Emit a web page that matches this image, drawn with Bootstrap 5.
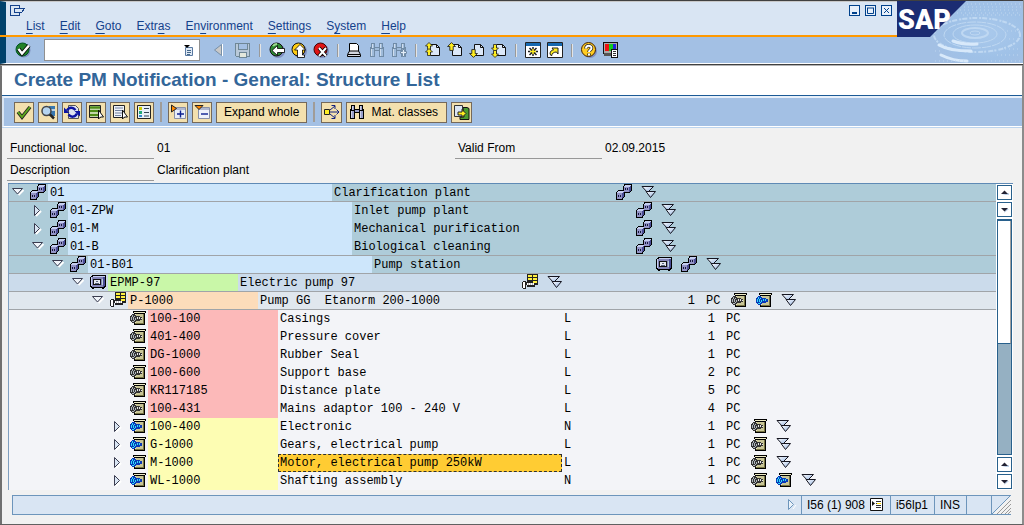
<!DOCTYPE html>
<html lang="en">
<head>
<meta charset="utf-8">
<meta name="viewport" content="width=device-width, initial-scale=1">
<title>Create PM Notification - General: Structure List</title>
<link href="https://cdn.jsdelivr.net/npm/bootstrap@5.3.0/dist/css/bootstrap.min.css" rel="stylesheet">
<style>
body{font:12px/18px "Liberation Sans",Arial,sans-serif;color:#000;background:#f1f1f1;min-height:100vh;overflow:hidden}
.win{min-height:100vh;border-right:2px solid #8c8c8c;border-bottom:1px solid #606060}
.hdr{border-top:1px solid #404040;border-bottom:1px solid #404040;background:#a3c0e4;margin-right:-1px}
.menuarea{height:34px;background:#d9e5f3;border-left:6px solid #00416b;border-top:1px solid #c8c8c8}
.caption{height:16px;padding:3px 5px 0 4px}
.wctls{column-gap:5px}
.mainmenu{padding-left:20px;gap:15px;line-height:16px}
.mainmenu a{color:#14418b;text-decoration:none}
.mainmenu u{text-underline-offset:3px}
.wctl{width:11px;height:11px;padding:0;border:1px solid #00418b;background:#e8f0fa;line-height:0}
.orange{height:2px;background:#f90}
.stdbar{height:27px;border-left:6px solid #00416b;padding-left:9px;border-bottom:1px solid #fff}
.tools{gap:6px}
.icobtn{border:0;background:none;padding:0;width:16px;height:16px;line-height:0;flex:none}
svg{display:block;flex:none}
.px{shape-rendering:crispEdges}
.sep{width:2px;height:13px;background:#e4e4e4;border-left:1px solid #999;flex:none}
.tools .sep{margin:0 2px}
.cmdbox{width:156px;height:22px;border:1px solid #909090;background:#fff;margin:0 13px}
.cmdbox input{border:0;outline:0;width:130px;background:transparent;padding:0 4px}
.work{border-left:2px solid #707070;border-top:1px solid #b4b4b4}
.apptitle{font-size:19px;line-height:28px;font-weight:bold;color:#336699;background:#fff;padding-left:12px;height:30px;border-bottom:1px solid #1c5a96;margin:0}
.appbar{background:#a3c0e4;height:31px;border-top:2px solid #e8f0fa;border-bottom:1px solid #fff;border-left:2px solid #d9e5f3;padding-left:10px;gap:4px}
.appline{height:1px;background:#bcd4ee}
.sapbtn{height:21px;min-width:20px;border:1px solid #75695a;background:#f3e0ae;padding:0 1px;font-size:12px;line-height:19px;color:#000}
.sapbtn.wide{padding:0 7px}
.sapbtn.find{padding:0 8px 0 2px;gap:6px;--f:#9aa0cc}
.appbar .sep{height:20px;background:#a09c98;border:0;margin:0 2px}
.dim{color:#708ba6;--f:#9fbbda}
.fields{padding:9px 0 2px 5px}
.frow{height:22px}
.flabel{width:147px;border-bottom:1px solid #989898;padding-left:3px;height:22px;padding-top:2px}
.fval{padding:2px 0 0 3px}
.fleft{width:448px}
.grid-wrap{margin:0 9px 0 6px;border-top:1px solid #5f8ab5}
.tree{list-style:none;margin:0;padding:0;font:12px/18px "Liberation Mono","Courier New",monospace;background:#f3f4f8;border-left:1px solid #7f9fc0;min-width:0;flex:1 1 0;color:#000;overflow:hidden}
.tree li{display:flex;height:18px;white-space:pre;padding-left:3px}
.tree li.ln{border-bottom:1px solid #a0a4a8}
.l1{margin-left:20px}.l2{margin-left:40px}.l3{margin-left:60px}.l4{margin-left:80px}.l5{margin-left:100px}
.tog{width:18px;height:18px;border:0;background:none;padding:0;flex:none;line-height:0}
.typ{width:18px;flex:none}
.key{flex:none;width:130px;padding-left:2px}
.key.w{width:284px;background:#cde6fb}
.dsc{flex:none;width:284px;padding-left:2px}
.cat{flex:none;width:118px;padding-left:2px}
.qty{flex:none;width:35px;text-align:right}
.uom{flex:none;width:36px;padding-left:11px}
.ics{gap:9px}
.teal{background:#aeccd9}.lav{background:#cbdbeb}.pale{background:#e0e7ee}
.grn{background:#c9f7a8}.pch{background:#fcdcba}.red{background:#fcb9b9}.yel{background:#fdfdb3}
.selc{background:#fc3;outline:1px dashed #303030;outline-offset:-1px}
.sbar{width:17px;background:#fff;padding:1px}
.sbar button{width:15px;height:15px;border:1px solid #28608c;background:#fff;padding:0;margin-bottom:2px;line-height:0;flex:none}
.track{border:1px solid #28608c;border-top-width:2px;background:#95b0c2;flex:1 1 0;margin:0 0 2px;display:flex}
.thumb{height:53%;flex:1;background:#fff;border-right:1px solid #a0a0a0;border-bottom:1px solid #28608c}
.sbar button:last-child{margin:0}
.status{margin:5px 11px 9px 10px;height:20px;border:1px solid #6d95bb;border-right:0;background:#d9e5f3;line-height:18px}
.status>div{border-left:1px solid #6d95bb;padding:0 6px 0 5px}
.status .spare{width:25px}
.sess{gap:5px}
</style>
</head>
<body>
<svg width="0" height="0" class="position-absolute" aria-hidden="true">
<defs>
<linearGradient id="tri" x1="0" y1="0" x2="1" y2="1"><stop offset="0" stop-color="#fff"/><stop offset="1" stop-color="#8fb0e0"/></linearGradient>
<symbol id="cubes" viewBox="0 0 16 16"><g class="px"><path fill="#000" d="M8 0h8v7h-1v1h-1v1H7V2h1zM2 6h7v7H8v1H7v2H0V8h1V7h1z"/><path fill="#c4cdf0" d="M9 1h6v1H9zM8 2h6v1H8zM2 7h6v1H2zM1 8h6v1H1z"/><path fill="#9394c6" d="M8 3h5v5H8zM1 9h5v6H1z"/><path fill="#4a4c94" d="M14 2h1v5h-1zM13 3h1v5h-1zM7 8h1v5H7zM6 9h1v5H6z"/><path fill="#16163c" d="M9 4h1v2H9zM11 4h1v2h-1zM2 11h1v2H2zM4 11h1v2H4z"/></g></symbol>
<symbol id="box" viewBox="0 0 16 16"><g class="px"><path fill="#000" d="M2 1h14v12h-1v1h-1v1h-2v-1H4v1H2v-1H1v-1H0V3h1V2h1z"/><path fill="#c4cdf0" d="M3 2h12v1H3zM1 3h1v9H1z"/><path fill="#8586b8" d="M2 3h11v10H2z"/><path fill="#4a4c94" d="M13 3h2v9h-1v1h-1z"/><path fill="#111" d="M3 5h8v6H3z"/><path fill="#e4e8ee" d="M4 6h6v4H4z"/><path fill="#5b6480" d="M5 9h4v1H5zM6 7h2v1H6z"/><path fill="#b8d0dc" d="M12 5h1v6h-1z"/></g></symbol>
<symbol id="bom" viewBox="0 0 16 16"><g class="px"><path fill="#222" d="M5 0h11v11h-3v2H5v-2H4v4H1v-1H0V8h1V7h3v1h1z"/><path fill="#fff040" d="M6 1h4v2H6zM11 1h4v2h-4zM6 4h4v2H6zM11 4h4v2h-4zM11 7h4v2h-4z"/><path fill="#fff" d="M1 8h2v6H1zM5 9h1v2H5zM7 9h1v2H7zM9 9h1v2H9zM11 9h1v2h-1z"/><path fill="#b8b8b8" d="M6 9h1v2H6zM8 9h1v2H8zM10 9h1v2h-1z"/></g></symbol>
<symbol id="mat" viewBox="0 0 16 16"><g class="px"><path fill="#000" d="M3 1h13v2h-1v12H4v-2H2V4h2V3H3z"/><path fill="#eeebc5" d="M4 2h11v1H4zM5 4h1v9H5z"/><path fill="#c8c597" d="M6 4h7v9H6z"/><path fill="#777442" d="M13 4h1v10H5v-1h8z"/><path fill="#333" d="M2 4h3v1h1v1h4v1h2v3h-2v1H6v1H5v1H2v-1H1v-1H0V6h1V5h1z"/><path fill="#aeb6be" d="M2 5h1v2H2zM1 7h1v3H1zM4 6h1v1H4zM3 7h1v3H3zM5 8h1v2H5zM2 11h2v1H2zM4 10h1v1H4z"/><path fill="#e8e8e8" d="M7 7h1v2H7zM9 7h1v2H9zM11 8h1v1h-1z"/></g></symbol>
<symbol id="matb" viewBox="0 0 16 16"><use href="#mat"/><g class="px"><path fill="#0838b8" d="M2 4h3v1h1v1h4v1h2v3h-2v1H6v1H5v1H2v-1H1v-1H0V6h1V5h1z"/><path fill="#30e0f8" d="M2 5h1v2H2zM1 7h1v3H1zM4 6h1v1H4zM3 7h1v3H3zM5 8h1v2H5zM2 11h2v1H2zM4 10h1v1H4zM7 7h1v2H7zM9 7h1v2H9z"/></g></symbol>
<symbol id="dn" viewBox="0 0 16 16"><path d="M1 2.500h11.500L6.500 8.500z" fill="url(#tri)" stroke="#151520"/><path d="M5 7.500h9.500L9.500 13.500z" fill="url(#tri)" stroke="#151520"/></symbol>
<symbol id="op" viewBox="0 0 18 18"><path d="M11.500 6 6.500 11" fill="none" stroke="#fff" stroke-width="2"/><path d="M.5 4.500h10L5.500 10z" fill="#f0f4fa" stroke="#3a3c50"/></symbol>
<symbol id="cl" viewBox="0 0 18 18"><path d="M4 14l5-5" stroke="#fff" stroke-width="2"/><path d="M2.500 3.500v10l5-5z" fill="#d9e5f3" stroke="#3a3c50"/></symbol>
<symbol id="bino" viewBox="0 0 16 16"><g class="px"><path d="M2 1h4v4h4V1h4v4h1v10h-5V9H6v6H1V5h1z" fill="currentColor"/><path fill="var(--f)" d="M3 2h2v4H3zM11 2h2v4h-2zM2 7h3v7H2zM11 7h3v7h-3zM6 6h4v2H6z"/><path fill="#fff" opacity=".5" d="M3 2h1v4H3zM11 2h1v4h-1zM2 7h1v7H2zM11 7h1v7h-1z"/></g></symbol>
<symbol id="page" viewBox="0 0 16 16"><path d="M5.500 2.500h6l3 3v8h-9z" fill="#dce8f8" stroke="#111"/><path d="M11.500 2.500v3h3" fill="none" stroke="#111"/></symbol>
<symbol id="ua" viewBox="0 0 8 8"><path d="M4 .5 7.500 4H5.500v3.500h-3V4H.5z" fill="#ffee20" stroke="#222" stroke-width=".8"/></symbol>
</defs>
</svg>

<div class="win d-flex flex-column">
<header class="hdr d-flex">
  <div class="flex-grow-1">
    <div class="menuarea">
      <div class="caption d-flex justify-content-between">
        <svg class="px" width="16" height="12" fill="none" stroke="#14418b"><path d="M9.500 3V.5H.5v10h9V8M4.500 3.500h10l-3 4h-7z"/></svg>
        <div class="wctls d-flex">
          <button class="wctl" aria-label="Minimize"><svg width="9" height="9"><path d="M2 6h5v2H2z" fill="#00418b"/></svg></button>
          <button class="wctl" aria-label="Maximize"><svg width="9" height="9"><path d="M1.500 2v5.500h6V2M1 2h7" fill="none" stroke="#00418b"/></svg></button>
          <button class="wctl" aria-label="Close"><svg width="9" height="9"><path d="M2 2l5 5M7 2l-5 5" stroke="#00418b"/></svg></button>
        </div>
      </div>
      <nav class="mainmenu d-flex"><a href="#"><u>L</u>ist</a><a href="#"><u>E</u>dit</a><a href="#"><u>G</u>oto</a><a href="#">Extr<u>a</u>s</a><a href="#">En<u>v</u>ironment</a><a href="#"><u>S</u>ettings</a><a href="#">S<u>y</u>stem</a><a href="#"><u>H</u>elp</a></nav>
    </div>
    <div class="orange"></div>
    <div class="stdbar d-flex align-items-center">
      <button class="icobtn" aria-label="Enter"><svg width="17" height="16"><circle cx="8.500" cy="8.500" r="7" fill="#8090c0"/><circle cx="7.500" cy="7.500" r="6.500" fill="#228228" stroke="#052" /><path d="M3.500 7l3.500 4.500 7-8" fill="none" stroke="#000" stroke-width="4"/><path d="M3.500 7l3.500 4.500 7-8" fill="none" stroke="#fff" stroke-width="2.400"/></svg></button>
      <div class="cmdbox d-flex align-items-center justify-content-between"><input type="text" aria-label="Command"><button class="icobtn me-1" aria-label="History"><svg class="ms-1" width="11" height="14"><path d="M2.500 4.500h7v8h-7z" fill="#dfe9f5" stroke="#5878a0"/><path d="M4 7.500h4M4 9.500h4M4 11.500h3" stroke="#468"/><path d="M1 2h6L4 5z" fill="#000"/></svg></button></div>
      <div class="tools d-flex align-items-center">
      <button class="icobtn" aria-label="Collapse"><svg width="14" height="16"><path d="M9.500 2v12" stroke="#fff"/><path d="M8.500 2.500v11L1.500 8z" fill="#c8c8c8" stroke="#7890a8"/></svg></button>
      <button class="icobtn" aria-label="Save"><svg class="px" width="16" height="16"><path d="M.5 1.500h14v13h-13l-1-1z" fill="#b9c9d9" stroke="#6f8796"/><path d="M3 1h9v6H3z" fill="#a3c0e4" stroke="#6f8796"/><path d="M4 10h7v5H4z" fill="#e4e8dc" stroke="#6f8796"/></svg></button>
      <span class="sep"></span>
      <button class="icobtn" aria-label="Back"><svg width="17" height="16"><circle cx="9" cy="9" r="7" fill="#8090c0"/><circle cx="7.500" cy="7.500" r="6.500" fill="#2d8a32" stroke="#111"/><path d="M4 4a5 5 0 0 1 4-2" stroke="#9ddc90" fill="none" stroke-width="2"/><path d="M3 8.500l5.500-5v3H15.500v4H8.500v3z" fill="#fff" stroke="#000" stroke-width=".8"/></svg></button>
      <button class="icobtn" aria-label="Exit"><svg width="17" height="16"><circle cx="9" cy="9" r="7" fill="#8090c0"/><circle cx="7.500" cy="7.500" r="6.500" fill="#fc1" stroke="#111"/><path d="M9 2.500l5.500 5.500h-3v5h2v2.500H6.500V8H3.500z" fill="#fff" stroke="#000" stroke-width=".8"/></svg></button>
      <button class="icobtn" aria-label="Cancel"><svg width="17" height="16"><circle cx="9" cy="9" r="7" fill="#8090c0"/><circle cx="7.500" cy="7.500" r="6.500" fill="#e01515" stroke="#400"/><path d="M6 6l7 8M13 6l-7 8" stroke="#000" stroke-width="3.500"/><path d="M6 6l7 8M13 6l-7 8" stroke="#fff" stroke-width="2"/></svg></button>
      <span class="sep"></span>
      <button class="icobtn" aria-label="Print"><svg width="16" height="16"><path d="M2.500 9V1.500h7l2 2V9" fill="#fff" stroke="#000"/><path d="M2.500 9h9l2 3.500v2H.5v-2z" fill="#d4d8e0" stroke="#000"/><path d="M1 12.500h12" stroke="#000"/></svg></button>
      <button class="icobtn dim" aria-label="Find"><svg width="16" height="16"><use href="#bino"/></svg></button>
      <button class="icobtn dim" aria-label="Find next"><svg width="17" height="16"><use href="#bino" width="16" height="16"/><path d="M11.500 7.500h2v2h2v2h-2v3h-2v-3h-2v-2h2z" fill="#e4edf6" stroke="#708ba6"/></svg></button>
      <span class="sep"></span>
      <button class="icobtn" aria-label="First page"><svg width="16" height="16"><use href="#page"/><use href="#ua" width="8" height="8"/><use href="#ua" y="6" width="8" height="8"/></svg></button>
      <button class="icobtn" aria-label="Previous page"><svg width="16" height="16"><use href="#page"/><use href="#ua" width="9" height="9"/></svg></button>
      <button class="icobtn" aria-label="Next page"><svg width="16" height="16"><use href="#page"/><use href="#ua" width="9" height="9" transform="matrix(1 0 0 -1 0 16)"/></svg></button>
      <button class="icobtn" aria-label="Last page"><svg width="16" height="16"><use href="#page"/><use href="#ua" width="8" height="8" transform="matrix(1 0 0 -1 0 10)"/><use href="#ua" width="8" height="8" transform="matrix(1 0 0 -1 0 16)"/></svg></button>
      <span class="sep"></span>
      <button class="icobtn" aria-label="New session"><svg width="16" height="16"><path d="M.5.500h15v15H.5z" fill="#fff" stroke="#222"/><path d="M1 1h14v3H1z" fill="#1668b0"/><path d="M8 5v9M3 9.500h10M4.500 6l7 7M11.500 6l-7 7" stroke="#222" stroke-width="1.500"/><path d="M8 7v5M5 9.500h6" stroke="#fe2" stroke-width="1.500"/></svg></button>
      <button class="icobtn" aria-label="Shortcut"><svg width="16" height="16"><path d="M.5.500h15v15H.5z" fill="#fff" stroke="#222"/><path d="M1 1h14v3H1z" fill="#1668b0"/><path d="M3 12c0-3 2-4 3.500-4L5 6h6v6L9.500 10C7 10 5 11 4.500 14z" fill="#fe2" stroke="#222"/></svg></button>
      <span class="sep"></span>
      <button class="icobtn" aria-label="Help"><svg width="17" height="16"><circle cx="9" cy="9" r="7" fill="#8090c0"/><circle cx="7.500" cy="7.500" r="7" fill="#fc2" stroke="#420"/><path d="M5 6.500C5 3 10.500 3 10.500 6c0 2-2.500 2-2.500 4M8 11.500v2" fill="none" stroke="#222" stroke-width="3.500"/><path d="M5 6.500C5 3 10.500 3 10.500 6c0 2-2.500 2-2.500 4M8 11.500v2" fill="none" stroke="#fff" stroke-width="2"/></svg></button>
      <button class="icobtn" aria-label="Customize layout"><svg class="px" width="16" height="16"><path d="M0 0h15v12H0z" fill="#111"/><path d="M1 1h13v10H1z" fill="#aaa"/><path d="M2 2h4v7H2z" fill="#e11"/><path d="M6 2h4v7H6z" fill="#1c2"/><path d="M10 2h3v7h-3z" fill="#22d"/><path d="M1 11h10v3H1z" fill="#555"/><path d="M8.500 7.500h6v8h-6z" fill="#fff" stroke="#111"/><path d="M10 9.500h3M10 11.500h3M10 13.500h3" stroke="#333"/></svg></button>
      </div>
    </div>
  </div>
  <svg width="126" height="63" viewBox="0 0 126 63" role="img" aria-label="SAP">
    <defs><radialGradient id="wat" cx=".62" cy=".5" r=".6"><stop offset="0" stop-color="#a9c9ec"/><stop offset=".7" stop-color="#9fc1e7"/><stop offset="1" stop-color="#a3c0e4"/></radialGradient></defs>
    <path d="M0 0h126v63H0z" fill="#a3c0e4"/><path d="M69 0h57v63H33V36z" fill="url(#wat)"/>
    <g fill="none" stroke="#bfd8f2"><ellipse cx="78" cy="32" rx="5" ry="2"/><ellipse cx="78" cy="32" rx="13" ry="5" stroke-width="2"/><ellipse cx="78" cy="33" rx="22" ry="9"/><ellipse cx="78" cy="34" rx="31" ry="13" stroke-dasharray="9 1"/><ellipse cx="80" cy="34" rx="43" ry="17" stroke-width="2" stroke-dasharray="2 1 5 2"/></g>
    <path d="M42 44q10 6 32 6M56 40q10 4 24 3M44 54q12 6 26 6" fill="none" stroke="#d8e9fa" stroke-width="3" stroke-linecap="round"/>
    <g fill="none" stroke="#bed6ef" stroke-dasharray="1 3"><path d="M70 3h54M67 6h57M63 9h60M60 12h62M66 14h58M110 30h14M112 38h12M104 48h20M100 54h23M90 60h34M38 50h8M38 60h30"/></g>
    <path d="M0 0h69L33 36H0z" fill="#1b2c72"/>
    <text x="1" y="28" font-family="Roboto,sans-serif" font-weight="900" font-size="27" fill="#fff">SAP</text>
    <path d="M0 62.500h126" stroke="#fff"/>
  </svg>
</header>

<main class="work flex-grow-1 d-flex flex-column">
  <h1 class="apptitle">Create PM Notification - General: Structure List</h1>
  <div class="appbar d-flex align-items-center">
    <button class="sapbtn" aria-label="Choose"><svg width="16" height="16"><path d="M2 8l4 5L14 3" fill="none" stroke="#222" stroke-width="3.600"/><path d="M2 8l4 5L14 3" fill="none" stroke="#5fa81c" stroke-width="2"/></svg></button>
    <button class="sapbtn" aria-label="Details"><svg width="16" height="16"><path d="M3 2h12v10H3z" fill="#b8d0e8"/><path d="M9 2h6v3H9zM9 7h6v5H9z" fill="#3878b0"/><circle cx="6.500" cy="7" r="4.500" fill="#b5d4f0" stroke="#444" stroke-width="1.500"/><path d="M10 10.500l4 4" stroke="#222" stroke-width="2.500"/></svg></button>
    <button class="sapbtn" aria-label="Refresh"><svg width="16" height="16"><path d="M4.500 1.500h7l3 3v10h-10z" fill="#dfe4f0" stroke="#555"/><path d="M3 6.500C5 3 9 3 11.500 6M13 9.500c-2 4-6 4-8.500 1" fill="none" stroke="#0c14a0" stroke-width="2.500"/><path d="M0 3.500v5.500h5.500zM16 12.500V7h-5.500z" fill="#0c14a0"/></svg></button>
    <button class="sapbtn" aria-label="Select block"><svg width="16" height="16"><path d="M1.500 1.500h11v12h-11z" fill="#e8f0d8" stroke="#222"/><path d="M2 3.500h10M2 7h10M2 11h8" stroke="#4d8a18" stroke-width="2.500"/><path d="M10.500 6v9l2-2h3z" fill="#fff" stroke="#111"/></svg></button>
    <button class="sapbtn" aria-label="Deselect block"><svg width="16" height="16"><path d="M1.500 1.500h11v12h-11z" fill="#eef2f8" stroke="#222"/><path d="M3 4h8M3 6.500h8M3 9h7M3 11.500h6" stroke="#7080a0"/><path d="M10.500 6v9l2-2h3z" fill="#fff" stroke="#111"/></svg></button>
    <button class="sapbtn" aria-label="Configuration"><svg width="16" height="16"><path d="M1.500 1.500h13v13h-13z" fill="#e8f0f8" stroke="#222"/><path d="M3 3h3v3H3z" fill="#cc0"/><path d="M3 7h3v3H3z" fill="#2a7"/><path d="M3 11h3v2H3z" fill="#38c"/><path d="M8 4.500h5M8 8.500h5M8 12h5" stroke="#345"/></svg></button>
    <span class="sep"></span>
    <button class="sapbtn" aria-label="Expand node"><svg width="16" height="16"><path d="M4.500 3.500h11v11h-11z" fill="#e8eefa" stroke="#8890a8"/><path d="M5 4h10v2H5z" fill="#b0b8d0"/><path d="M7 10h7M10.500 6.500v7" stroke="#0c2090" stroke-width="1.400"/><path d="M1.500 1v7L6.500 4.500z" fill="#f80" stroke="#222"/></svg></button>
    <button class="sapbtn" aria-label="Collapse node"><svg width="16" height="16"><path d="M4.500 3.500h11v11h-11z" fill="#eef2fa" stroke="#8890a8"/><path d="M5 4h10v2H5z" fill="#b0b8d0"/><path d="M7 10h7" stroke="#0c2090" stroke-width="1.400"/><path d="M1 1.500h8L5 5.500z" fill="#f80" stroke="#222"/></svg></button>
    <button class="sapbtn wide">Expand whole</button>
    <span class="sep"></span>
    <button class="sapbtn" aria-label="Where used"><svg width="17" height="16"><path d="M1.500 5.500h5v5h-5z" fill="#fe2" stroke="#222"/><path d="M7 8h9M13.500 5.500L16 8l-2.500 2.500M7 6l5-4M8.500 1.500H12V5M7 10l5 4M8.500 14.500H12V11" fill="none" stroke="#102080"/></svg></button>
    <button class="sapbtn find d-flex align-items-center"><svg width="16" height="16"><use href="#bino"/></svg>Mat. classes</button>
    <button class="sapbtn" aria-label="Leave"><svg width="17" height="16"><path d="M10 3.500h4l2 1v11H7V13h4z" fill="#4a9a30" stroke="#111"/><path d="M1.500 1.500h8v11h-8z" fill="#dce6f4" stroke="#333"/><path d="M5 8h4V5.500L13 9.500l-4 4V11H5z" fill="#fe2" stroke="#222"/></svg></button>
  </div>
  <div class="appline"></div>
  <div class="fields">
    <div class="frow d-flex"><div class="fleft d-flex"><div class="flabel">Functional loc.</div><div class="fval">01</div></div><div class="flabel">Valid From</div><div class="fval">02.09.2015</div></div>
    <div class="frow d-flex"><div class="flabel">Description</div><div class="fval">Clarification plant</div></div>
  </div>
  <div class="grid-wrap d-flex">
    <ul class="tree">
      <li class="teal ln"><button class="tog" aria-label="Collapse"><svg width="18" height="18"><use href="#op"/></svg></button><span class="typ"><svg width="16" height="16"><use href="#cubes"/></svg></span><span class="key w">01</span><span class="dsc">Clarification plant</span><span class="ics d-flex"><svg width="16" height="16"><use href="#cubes"/></svg><svg width="16" height="16"><use href="#dn"/></svg></span></li>
      <li class="teal"><button class="tog l1" aria-label="Expand"><svg width="18" height="18"><use href="#cl"/></svg></button><span class="typ"><svg width="16" height="16"><use href="#cubes"/></svg></span><span class="key w">01-ZPW</span><span class="dsc">Inlet pump plant</span><span class="ics d-flex"><svg width="16" height="16"><use href="#cubes"/></svg><svg width="16" height="16"><use href="#dn"/></svg></span></li>
      <li class="teal"><button class="tog l1" aria-label="Expand"><svg width="18" height="18"><use href="#cl"/></svg></button><span class="typ"><svg width="16" height="16"><use href="#cubes"/></svg></span><span class="key w">01-M</span><span class="dsc">Mechanical purification</span><span class="ics d-flex"><svg width="16" height="16"><use href="#cubes"/></svg><svg width="16" height="16"><use href="#dn"/></svg></span></li>
      <li class="teal ln"><button class="tog l1" aria-label="Collapse"><svg width="18" height="18"><use href="#op"/></svg></button><span class="typ"><svg width="16" height="16"><use href="#cubes"/></svg></span><span class="key w">01-B</span><span class="dsc">Biological cleaning</span><span class="ics d-flex"><svg width="16" height="16"><use href="#cubes"/></svg><svg width="16" height="16"><use href="#dn"/></svg></span></li>
      <li class="teal ln"><button class="tog l2" aria-label="Collapse"><svg width="18" height="18"><use href="#op"/></svg></button><span class="typ"><svg width="16" height="16"><use href="#cubes"/></svg></span><span class="key w">01-B01</span><span class="dsc">Pump station</span><span class="ics d-flex"><svg width="16" height="16"><use href="#box"/></svg><svg width="16" height="16"><use href="#cubes"/></svg><svg width="16" height="16"><use href="#dn"/></svg></span></li>
      <li class="lav ln"><button class="tog l3" aria-label="Collapse"><svg width="18" height="18"><use href="#op"/></svg></button><span class="typ"><svg width="16" height="16"><use href="#box"/></svg></span><span class="key grn">EPMP-97</span><span class="dsc">Electric pump 97</span><span class="ics d-flex"><svg width="16" height="16"><use href="#bom"/></svg><svg width="16" height="16"><use href="#dn"/></svg></span></li>
      <li class="pale ln"><button class="tog l4" aria-label="Collapse"><svg width="18" height="18"><use href="#op"/></svg></button><span class="typ"><svg width="16" height="16"><use href="#bom"/></svg></span><span class="key pch">P-1000</span><span class="dsc">Pump GG  Etanorm 200-1000</span><span class="cat"></span><span class="qty">1</span><span class="uom">PC</span><span class="ics d-flex"><svg width="16" height="16"><use href="#mat"/></svg><svg width="16" height="16"><use href="#matb"/></svg><svg width="16" height="16"><use href="#dn"/></svg></span></li>
      <li><span class="tog l5"></span><span class="typ"><svg width="16" height="16"><use href="#mat"/></svg></span><span class="key red">100-100</span><span class="dsc">Casings</span><span class="cat">L</span><span class="qty">1</span><span class="uom">PC</span></li>
      <li><span class="tog l5"></span><span class="typ"><svg width="16" height="16"><use href="#mat"/></svg></span><span class="key red">401-400</span><span class="dsc">Pressure cover</span><span class="cat">L</span><span class="qty">1</span><span class="uom">PC</span></li>
      <li><span class="tog l5"></span><span class="typ"><svg width="16" height="16"><use href="#mat"/></svg></span><span class="key red">DG-1000</span><span class="dsc">Rubber Seal</span><span class="cat">L</span><span class="qty">1</span><span class="uom">PC</span></li>
      <li><span class="tog l5"></span><span class="typ"><svg width="16" height="16"><use href="#mat"/></svg></span><span class="key red">100-600</span><span class="dsc">Support base</span><span class="cat">L</span><span class="qty">2</span><span class="uom">PC</span></li>
      <li><span class="tog l5"></span><span class="typ"><svg width="16" height="16"><use href="#mat"/></svg></span><span class="key red">KR117185</span><span class="dsc">Distance plate</span><span class="cat">L</span><span class="qty">5</span><span class="uom">PC</span></li>
      <li><span class="tog l5"></span><span class="typ"><svg width="16" height="16"><use href="#mat"/></svg></span><span class="key red">100-431</span><span class="dsc">Mains adaptor 100 - 240 V</span><span class="cat">L</span><span class="qty">4</span><span class="uom">PC</span></li>
      <li><button class="tog l5" aria-label="Expand"><svg width="18" height="18"><use href="#cl"/></svg></button><span class="typ"><svg width="16" height="16"><use href="#matb"/></svg></span><span class="key yel">100-400</span><span class="dsc">Electronic</span><span class="cat">N</span><span class="qty">1</span><span class="uom">PC</span><span class="ics d-flex"><svg width="16" height="16"><use href="#mat"/></svg><svg width="16" height="16"><use href="#dn"/></svg></span></li>
      <li><button class="tog l5" aria-label="Expand"><svg width="18" height="18"><use href="#cl"/></svg></button><span class="typ"><svg width="16" height="16"><use href="#matb"/></svg></span><span class="key yel">G-1000</span><span class="dsc">Gears, electrical pump</span><span class="cat">L</span><span class="qty">1</span><span class="uom">PC</span><span class="ics d-flex"><svg width="16" height="16"><use href="#mat"/></svg><svg width="16" height="16"><use href="#dn"/></svg></span></li>
      <li><button class="tog l5" aria-label="Expand"><svg width="18" height="18"><use href="#cl"/></svg></button><span class="typ"><svg width="16" height="16"><use href="#matb"/></svg></span><span class="key yel">M-1000</span><span class="dsc selc">Motor, electrical pump 250kW</span><span class="cat">L</span><span class="qty">1</span><span class="uom">PC</span><span class="ics d-flex"><svg width="16" height="16"><use href="#mat"/></svg><svg width="16" height="16"><use href="#dn"/></svg></span></li>
      <li><button class="tog l5" aria-label="Expand"><svg width="18" height="18"><use href="#cl"/></svg></button><span class="typ"><svg width="16" height="16"><use href="#matb"/></svg></span><span class="key yel">WL-1000</span><span class="dsc">Shafting assembly</span><span class="cat">N</span><span class="qty">1</span><span class="uom">PC</span><span class="ics d-flex"><svg width="16" height="16"><use href="#mat"/></svg><svg width="16" height="16"><use href="#matb"/></svg><svg width="16" height="16"><use href="#dn"/></svg></span></li>
    </ul>
    <div class="sbar d-flex flex-column">
      <button aria-label="Line up"><svg width="13" height="13"><path d="M4 9h7V7z" fill="#bcd0e8"/><path d="M3 8h7L6.500 4.500z" fill="#223"/></svg></button>
      <button aria-label="Line down"><svg width="13" height="13"><path d="M6 10l5-4h-3z" fill="#bcd0e8"/><path d="M3 5h7L6.500 8.500z" fill="#223"/></svg></button>
      <div class="track"><div class="thumb"></div></div>
      <button aria-label="Page up"><svg width="13" height="13"><path d="M4 9h7V7z" fill="#bcd0e8"/><path d="M3 8h7L6.500 4.500z" fill="#223"/></svg></button>
      <button aria-label="Page down"><svg width="13" height="13"><path d="M6 10l5-4h-3z" fill="#bcd0e8"/><path d="M3 5h7L6.500 8.500z" fill="#223"/></svg></button>
    </div>
  </div>
  <footer class="status d-flex justify-content-end">
    <svg class="me-1" width="12" height="18"><path d="M8 13l3-4" stroke="#fff"/><path d="M3.500 3.500v10l5-5z" fill="#eaf2fa" stroke="#6d95bb"/></svg>
    <div class="sess d-flex align-items-center">I56 (1) 908<svg width="14" height="14"><path d="M.5.500h12v12H.5z" fill="#fff" stroke="#111"/><path d="M2 3v5l3-2.500z" fill="#111"/><path d="M6 3.500h5M6 5.500h5M6 7.500h5M6 9.500h5" stroke="#333"/><path d="M7 5.500h4" stroke="#fd0"/></svg></div>
    <div>i56lp1</div><div>INS</div><div class="spare"></div>
    <svg width="20" height="18"><path d="M19 0H20V18H2z" fill="#f1f1f1"/><path d="M1 18L19 0M.5 0v18" stroke="#6d95bb" fill="none"/><path d="M6 18L20 4M10 18L20 8M14 18L20 12M17 18l3-3" stroke="#999"/></svg>
  </footer>
</main>
</div>
<script src="https://cdn.jsdelivr.net/npm/bootstrap@5.3.0/dist/js/bootstrap.bundle.min.js"></script>
</body>
</html>
